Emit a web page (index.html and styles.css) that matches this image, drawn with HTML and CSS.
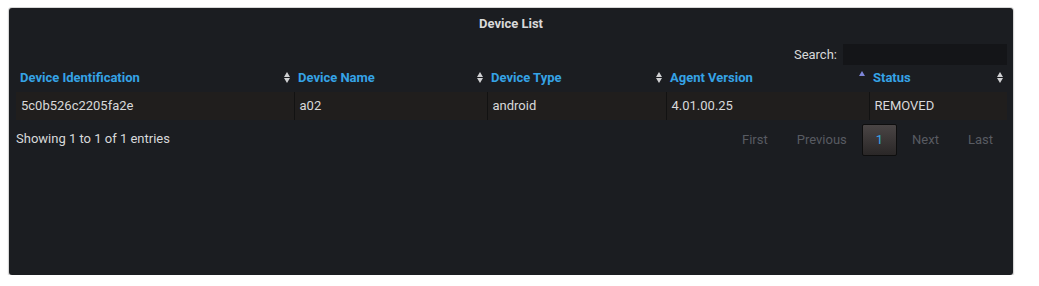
FILE: index.html
```html
<!DOCTYPE html>
<html lang="en">
  <head>
    <meta charset="UTF-8" />
    <title>Device List</title>
    <link rel="stylesheet" href="styles.css">
  </head>
  <body>
    <div class="panel">
      <div class="panel-title">Device List</div>
      <div class="panel-body">
        <div class="search-row">
          <label for="search">Search:</label>
          <input type="search" id="search" />
        </div>

        <table class="device-table">
          <colgroup>
            <col style="width: 278px" />
            <col style="width: 193px" />
            <col style="width: 179px" />
            <col style="width: 203px" />
            <col style="width: 138px" />
          </colgroup>
          <thead>
            <tr>
              <th><span class="th-inner">Device Identification <i class="sort both"></i></span></th>
              <th><span class="th-inner">Device Name <i class="sort both"></i></span></th>
              <th><span class="th-inner">Device Type <i class="sort both"></i></span></th>
              <th><span class="th-inner">Agent Version <i class="sort asc"></i></span></th>
              <th><span class="th-inner">Status <i class="sort both"></i></span></th>
            </tr>
          </thead>
          <tbody>
            <tr>
              <td>5c0b526c2205fa2e</td>
              <td>a02</td>
              <td>android</td>
              <td>4.01.00.25</td>
              <td>REMOVED</td>
            </tr>
          </tbody>
        </table>

        <div class="table-footer">
          <div class="info">Showing 1 to 1 of 1 entries</div>
          <div class="paging">
            <a class="page-btn disabled">First</a>
            <a class="page-btn disabled">Previous</a>
            <a class="page-btn current">1</a>
            <a class="page-btn disabled">Next</a>
            <a class="page-btn disabled">Last</a>
          </div>
        </div>
      </div>
    </div>
  </body>
</html>
```

FILE: styles.css
```css
body {
  margin: 0;
  background-color: #ffffff;
  font-family: Roboto, "Liberation Sans", sans-serif;
  font-size: 13px;
  color: #d8d9da;
}

.panel {
  margin: 8px 0 0 9px;
  width: 1004px;
  height: 267px;
  background-color: #1b1d21;
  border-radius: 3px;
  box-shadow: 0 0 0 1px #d6d6d6, 0 1px 2px rgba(0, 0, 0, 0.45);
  box-sizing: border-box;
}

.panel-title {
  height: 30px;
  padding-top: 1px;
  line-height: 30px;
  text-align: center;
  font-weight: bold;
  color: #d8d9da;
}

.panel-body {
  padding: 5px 6px 0 7px;
}

.search-row {
  display: flex;
  justify-content: flex-end;
  align-items: center;
  height: 21px;
}

.search-row label {
  margin-right: 6px;
}

.search-row input {
  width: 164px;
  height: 21px;
  box-sizing: border-box;
  border: none;
  background-color: #141518;
  color: #d8d9da;
  outline: none;
}

.device-table {
  margin-top: 3px;
  width: 991px;
  border-collapse: collapse;
  table-layout: fixed;
}

.device-table th {
  height: 18px;
  padding: 0 3px 4px 4px;
  text-align: left;
  color: #35a3e6;
  font-weight: bold;
}

.th-inner {
  display: flex;
  justify-content: space-between;
  align-items: center;
}

.sort {
  display: inline-block;
  width: 7px;
  height: 11px;
  position: relative;
}

.sort.both::before,
.sort.both::after,
.sort.asc::before {
  content: "";
  position: absolute;
  left: 0;
  border-left: 3.5px solid transparent;
  border-right: 3.5px solid transparent;
}

.sort.both::before {
  top: 0;
  border-bottom: 5px solid #cfd0d2;
}

.sort.both::after {
  bottom: 0;
  border-top: 5px solid #cfd0d2;
}

.sort.asc::before {
  top: -1px;
  border-bottom: 5px solid #7e86d8;
}

.device-table tbody tr {
  background-color: #201e1d;
}

.device-table td {
  height: 26px;
  padding: 0 5px 2px;
  border-top: 2px solid #1b1d21;
  border-left: 1px solid #121212;
}

.device-table td:first-child {
  border-left: none;
}

.table-footer {
  display: flex;
  justify-content: space-between;
  align-items: flex-start;
  margin-top: 4px;
}

.info {
  padding-top: 7px;
}

.paging {
  display: flex;
}

.page-btn {
  padding: 6px 13px;
  margin-left: 1px;
  line-height: 18px;
  border: 1px solid transparent;
  border-radius: 2px;
  color: #585b62;
}

.page-btn.current {
  color: #35a3e6;
  border-color: #0e0e0e;
  background: linear-gradient(to bottom, #4a4545, #2a2727);
}
```
